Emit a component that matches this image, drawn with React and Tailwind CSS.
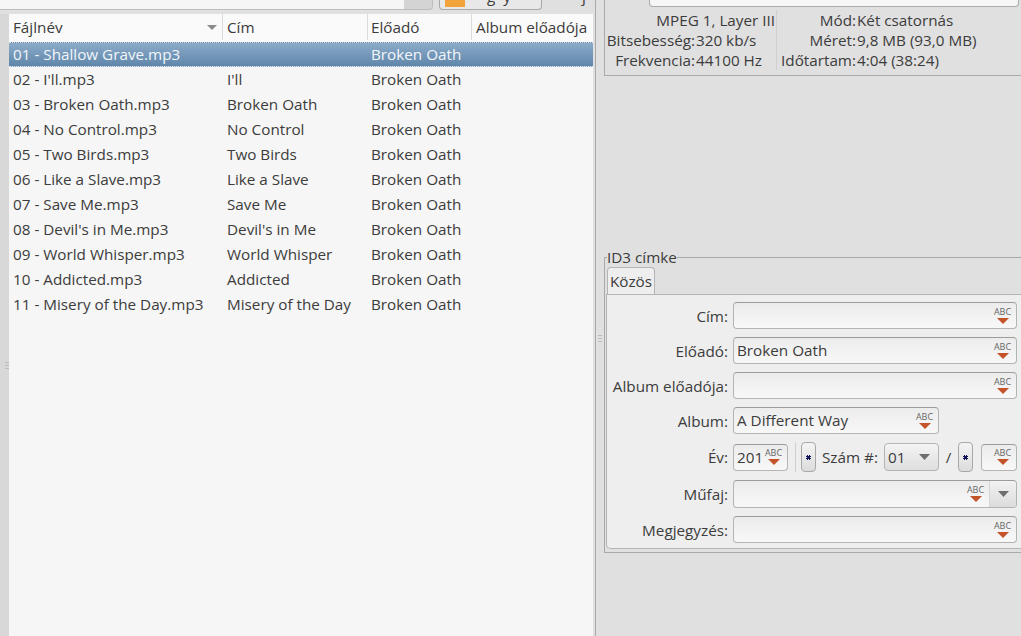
import React from 'react';

const tracks = [
  ['01 - Shallow Grave.mp3', '', 'Broken Oath'],
  ["02 - I'll.mp3", "I'll", 'Broken Oath'],
  ['03 - Broken Oath.mp3', 'Broken Oath', 'Broken Oath'],
  ['04 - No Control.mp3', 'No Control', 'Broken Oath'],
  ['05 - Two Birds.mp3', 'Two Birds', 'Broken Oath'],
  ['06 - Like a Slave.mp3', 'Like a Slave', 'Broken Oath'],
  ['07 - Save Me.mp3', 'Save Me', 'Broken Oath'],
  ["08 - Devil's in Me.mp3", "Devil's in Me", 'Broken Oath'],
  ['09 - World Whisper.mp3', 'World Whisper', 'Broken Oath'],
  ['10 - Addicted.mp3', 'Addicted', 'Broken Oath'],
  ['11 - Misery of the Day.mp3', 'Misery of the Day', 'Broken Oath'],
];

const entryClass =
  'flex h-[27px] items-center rounded-[4px] border border-[#b4b4b4] border-t-[#9c9c9c] bg-gradient-to-b from-[#ececec] to-[#f8f8f8] pl-[3px] pr-[5px]';

// the small ABC case-conversion marker at the end of every entry
const AbcIcon = () => (
  <span className="ml-auto flex w-[17px] shrink-0 flex-col items-center">
    <span className="text-[9px] leading-[8px] text-[#666]">ABC</span>
    <svg width="12" height="6" viewBox="0 0 12 6" className="mt-[2px]">
      <path d="M0 0h12L6 6z" fill="#c4532a" />
    </svg>
  </span>
);

const Entry = ({ value, className = '' }) => (
  <div className={`${entryClass} ${className}`}>
    <span className="whitespace-nowrap">{value}</span>
    <AbcIcon />
  </div>
);

const Arrow = () => (
  <svg width="11" height="6" viewBox="0 0 11 6">
    <path d="M0 0h11L5.5 6z" fill="#6e6e6e" />
  </svg>
);

const SpinDot = () => (
  <div className="flex h-[30px] w-[15px] shrink-0 items-center justify-center rounded-[4px] border border-[#a8a8a8] bg-gradient-to-b from-[#f4f4f4] to-[#dcdcdc]">
    <svg width="5" height="5" viewBox="0 0 5 5">
      <path d="M1 0h1v1h1V0h1v1h1v1H4v1h1v1H4v1H3V4H2v1H1V4H0V3h1V2H0V1h1z" fill="#14145a" />
    </svg>
  </div>
);

// pane resize grip
const Grip = ({ className = '' }) => (
  <span className={`flex w-[4px] flex-col gap-[2px] ${className}`}>
    <span className="h-px bg-[#bcbcbc]" />
    <span className="h-px bg-[#bcbcbc]" />
    <span className="h-px bg-[#bcbcbc]" />
  </span>
);

const Label = ({ children }) => <span className="whitespace-nowrap text-right leading-[20px]">{children}</span>;

export default function App() {
  return (
    <div
      className="flex h-[636px] w-[1021px] overflow-hidden bg-[#e0e0e0] text-[15.25px] text-[#3c3c3c]"
      style={{ fontFamily: '"Open Sans", sans-serif' }}
    >
      {/* left pane */}
      <div className="flex w-[596px] shrink-0 flex-col border-r border-[#a9a9a9]">
        <div className="flex h-[10px] shrink-0 items-end overflow-hidden">
          <div className="h-[10px] w-[404px] border-b border-[#bdbdbd] bg-[#f6f6f6]" />
          <div className="h-[10px] w-[29px] rounded-br-[4px] border-b border-r border-[#bdbdbd] bg-[#d4d4d4]" />
          <div className="ml-[6px] flex h-[10px] w-[103px] items-end overflow-hidden rounded-b-[4px] border border-t-0 border-[#a8a8a8] bg-[#e8e8e8] pl-[5px]">
            <span className="mb-[2px] h-[7px] w-[20px] shrink-0 bg-[#f2a33a]" />
            <span className="mb-[3px] ml-[22px] shrink-0 whitespace-pre leading-[20px]">g  y</span>
          </div>
          <span className="mb-[4px] ml-[40px] shrink-0 leading-[20px]">j</span>
        </div>
        <div className="h-[4px] shrink-0" />
        <div className="flex flex-1">
          <div className="flex w-[9px] shrink-0 items-start bg-[#d8d8d8]">
            <Grip className="ml-[5px] mt-[348px]" />
          </div>
          <div className="w-[584px] bg-[#f6f6f6]">
            <div className="grid h-[28px] grid-cols-[214px_145px_104px_121px] items-center bg-[#fafafa] pb-[2px]">
              <div className="flex h-full items-center justify-between border-r border-[#dcdcdc] pl-[4px] pr-[5px]">
                <span>Fájlnév</span>
                <svg width="10" height="5" viewBox="0 0 10 5">
                  <path d="M0 0h10L5 5z" fill="#8a8a8a" />
                </svg>
              </div>
              <div className="flex h-full items-center border-r border-[#dcdcdc] pl-[4px]">Cím</div>
              <div className="flex h-full items-center border-r border-[#dcdcdc] pl-[3px]">Előadó</div>
              <div className="flex h-full items-center whitespace-nowrap pl-[4px]">Album előadója</div>
            </div>
            {tracks.map((track, i) => (
              <div
                key={track[0]}
                className={
                  i === 0
                    ? 'grid h-[25px] grid-cols-[214px_145px_225px] items-center border-y border-dotted border-[#d8e2ec] bg-gradient-to-b from-[#8cabc9] to-[#5f86aa] text-[#f2f6fa]'
                    : 'grid h-[25px] grid-cols-[214px_145px_225px] items-center'
                }
              >
                <span className="pl-[4px]">{track[0]}</span>
                <span className="pl-[4px]">{track[1]}</span>
                <span className="pl-[3px]">{track[2]}</span>
              </div>
            ))}
          </div>
        </div>
      </div>

      {/* right pane */}
      <div className="flex w-[8px] shrink-0 items-start">
        <Grip className="ml-[2px] mt-[335px]" />
      </div>
      <div className="flex min-w-0 flex-1 flex-col">
        <div className="h-[76px] shrink-0 border-b border-l border-[#a9a9a9]">
          <div className="ml-[44px] h-[7px] w-[370px] rounded-b-[4px] border border-t-0 border-[#aaa] bg-[#f6f6f6]" />
          <div className="flex items-start pt-[3px] leading-[20px]">
            <div className="flex h-[60px] w-[172px] shrink-0 flex-col whitespace-nowrap border-r border-[#cfcfcf]">
              <div className="pr-[1px] text-right">MPEG 1, Layer III</div>
              <div className="grid grid-cols-[90px_auto] gap-x-[1px]">
                <Label>Bitsebesség:</Label>
                <span>320 kb/s</span>
                <Label>Frekvencia:</Label>
                <span>44100 Hz</span>
              </div>
            </div>
            <div className="grid grid-cols-[77px_auto] gap-x-[1px] whitespace-nowrap pl-[2px]">
              <Label>Mód:</Label>
              <span>Két csatornás</span>
              <Label>Méret:</Label>
              <span>9,8 MB (93,0 MB)</span>
              <Label>Időtartam:</Label>
              <span>4:04 (38:24)</span>
            </div>
          </div>
        </div>

        <div className="flex flex-1 items-start pt-[173px]">
          <fieldset className="-mr-px w-full border-y border-l border-[#a9a9a9] pb-[3px] pl-px">
            <legend className="ml-[1px] leading-[16px]">ID3 címke</legend>
            <div className="flex h-[30px] items-end border-b border-[#b4b4b4] pl-px">
              <div className="flex h-[27px] w-[48px] items-center justify-center rounded-t-[4px] border border-b-0 border-[#b4b4b4] bg-[#eeeeee]">
                Közös
              </div>
            </div>
            <div className="grid grid-cols-[121px_284px] items-center gap-x-[5px] gap-y-[8px] rounded-bl-[5px] border-b border-l border-[#b4b4b4] bg-[#eeeeee] pb-[5px] pt-[7px]">
              <Label>Cím:</Label>
              <Entry />
              <Label>Előadó:</Label>
              <Entry value="Broken Oath" />
              <Label>Album előadója:</Label>
              <Entry />
              <Label>Album:</Label>
              <Entry value="A Different Way" className="w-[206px]" />
              <Label>Év:</Label>
              <div className="flex items-center">
                <Entry value="201" className="w-[55px]" />
                <span className="ml-[7px] mr-[5px] h-[30px] border-l border-[#d0d0d0]" />
                <SpinDot />
                <span className="ml-[6px] w-[56px] whitespace-nowrap">Szám #:</span>
                <div className="ml-[6px] flex h-[28px] w-[55px] items-center rounded-[4px] border border-[#b4b4b4] bg-gradient-to-b from-[#f4f4f4] to-[#dedede]">
                  <span className="w-[26px] pl-[3px]">01</span>
                  <span className="flex flex-1 justify-center">
                    <Arrow />
                  </span>
                </div>
                <span className="w-[19px] text-center">/</span>
                <SpinDot />
                <Entry className="ml-[8px] w-[36px]" />
              </div>
              <Label>Műfaj:</Label>
              <div className="flex h-[28px] rounded-[4px] border border-[#b4b4b4] border-t-[#9c9c9c] bg-gradient-to-b from-[#ececec] to-[#f8f8f8]">
                <span className="ml-auto mr-[5px] flex items-center">
                  <AbcIcon />
                </span>
                <span className="flex w-[27px] items-center justify-center rounded-r-[4px] border-l border-[#d4d4d4] bg-gradient-to-b from-[#f2f2f2] to-[#dcdcdc]">
                  <Arrow />
                </span>
              </div>
              <Label>Megjegyzés:</Label>
              <Entry />
            </div>
          </fieldset>
        </div>
      </div>
    </div>
  );
}
